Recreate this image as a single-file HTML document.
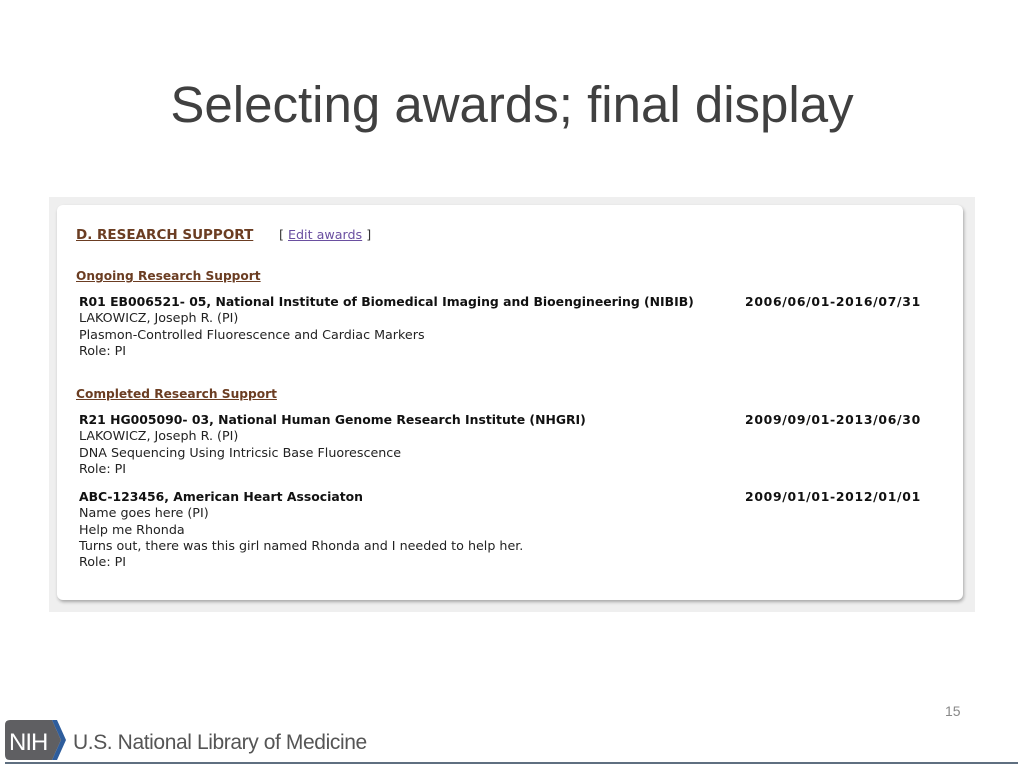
<!DOCTYPE html>
<html><head><meta charset="utf-8"><style>
body{margin:0;width:1024px;height:768px;background:#fff;position:relative;overflow:hidden;font-family:"Liberation Sans",sans-serif}
.title{position:absolute;top:75px;left:0;width:1024px;text-align:center;font-size:51px;color:#404040;line-height:60px}
.outer{position:absolute;left:49px;top:197px;width:926px;height:415px;background:#efefef}
.card{position:absolute;left:8px;top:8px;width:906px;height:395px;background:#fff;border-radius:6px;box-shadow:1px 2px 3px rgba(0,0,0,.3)}
.t{position:absolute;font-family:"DejaVu Sans",Verdana,sans-serif;font-size:12.7px;color:#222;white-space:nowrap;line-height:16.3px}
.b{font-weight:bold;color:#111;font-size:12.4px}
.d{letter-spacing:0.7px}
.h{font-weight:bold;color:#6b3d22;text-decoration:underline}
a{color:#6a4fa0}
.foot{position:absolute;left:945px;top:703px;font-size:14px;color:#888}
</style></head><body>
<div class="title">Selecting awards; final display</div>
<div class="outer"><div class="card">
<div class="t h" style="left:19px;top:22px;font-size:13.5px">D. RESEARCH SUPPORT</div>
<div class="t" style="left:222px;top:22px;color:#333">[ <a style="text-decoration:underline">Edit awards</a> ]</div>
<div class="t h" style="left:19px;top:63px;font-size:12.2px">Ongoing Research Support</div>
<div class="t" style="left:22px;top:89px"><span class="b">R01 EB006521- 05, National Institute of Biomedical Imaging and Bioengineering (NIBIB)</span><br>LAKOWICZ, Joseph R. (PI)<br>Plasmon-Controlled Fluorescence and Cardiac Markers<br>Role: PI</div>
<div class="t b d" style="left:688px;top:89px">2006/06/01-2016/07/31</div>
<div class="t h" style="left:19px;top:181px;font-size:12.2px">Completed Research Support</div>
<div class="t" style="left:22px;top:207px"><span class="b">R21 HG005090- 03, National Human Genome Research Institute (NHGRI)</span><br>LAKOWICZ, Joseph R. (PI)<br>DNA Sequencing Using Intricsic Base Fluorescence<br>Role: PI</div>
<div class="t b d" style="left:688px;top:207px">2009/09/01-2013/06/30</div>
<div class="t" style="left:22px;top:284px"><span class="b">ABC-123456, American Heart Associaton</span><br>Name goes here (PI)<br>Help me Rhonda<br>Turns out, there was this girl named Rhonda and I needed to help her.<br>Role: PI</div>
<div class="t b d" style="left:688px;top:284px">2009/01/01-2012/01/01</div>
</div></div>
<div class="foot">15</div>
<svg style="position:absolute;left:0;top:715px" width="1024" height="53">
<path d="M5 10 Q5 5 10 5 L52 5 L61 25 L52 45 L10 45 Q5 45 5 40 Z" fill="#5f5f62"/>
<path d="M52 5 L57 5 L66 25 L57 45 L52 45 L61 25 Z" fill="#2e5d9c"/>
<text x="9" y="35" font-family="Liberation Sans" font-size="24" fill="#fff" letter-spacing="-1">NIH</text>
<text x="73" y="34" font-family="Liberation Sans" font-size="21" fill="#555" letter-spacing="-0.4">U.S. National Library of Medicine</text>
<rect x="5" y="47" width="1013" height="2" fill="#5f6f80"/>
</svg>
</body></html>
